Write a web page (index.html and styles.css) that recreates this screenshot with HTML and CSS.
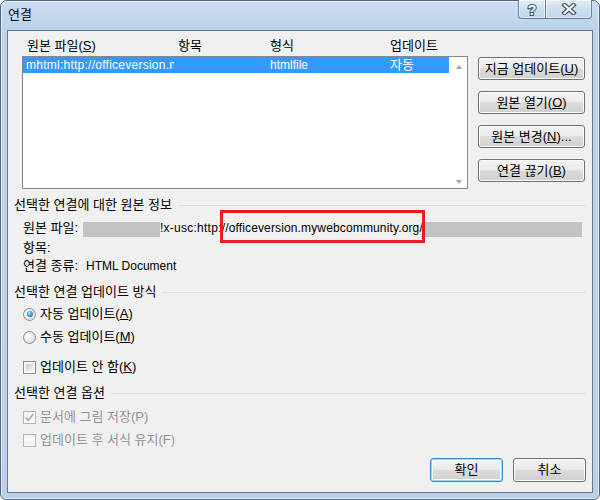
FILE: index.html
```html
<!DOCTYPE html>
<html lang="ko">
<head>
<meta charset="utf-8">
<title>연결</title>
<link rel="stylesheet" href="styles.css">
</head>
<body>
<div class="window">
  <div class="titlebar">
    <span class="title">연결</span>
    <div class="caption">
      <div class="cap help">
        <svg width="14" height="16" viewBox="0 0 14 16"><text x="7" y="13.5" text-anchor="middle" font-size="14" font-weight="bold" font-family="Liberation Sans, sans-serif" fill="#fff" stroke="#45556a" stroke-width="2.2" paint-order="stroke">?</text></svg>
      </div>
      <div class="cap close">
        <svg width="16" height="12" viewBox="0 0 16 12"><path d="M3.5 2L12.5 10M12.5 2L3.5 10" stroke="#45556a" stroke-width="4.4" stroke-linecap="square" fill="none"/><path d="M3.5 2L12.5 10M12.5 2L3.5 10" stroke="#fff" stroke-width="2" stroke-linecap="square" fill="none"/></svg>
      </div>
    </div>
  </div>
  <div class="client">
    <div class="top">
      <div class="links">
        <div class="cols head"><span>원본 파일(<u>S</u>)</span><span>항목</span><span>형식</span><span>업데이트</span></div>
        <div class="list">
          <div class="rows">
            <div class="cols row sel"><span class="cell1"><span class="clip lat url">mhtml:http://officeversion.m</span></span><span></span><span class="lat">htmlfile</span><span>자동</span></div>
          </div>
          <div class="scroll"><i class="arr up"></i><i class="arr down"></i></div>
        </div>
      </div>
      <div class="actions">
        <div class="btn">지금 업데이트(<u>U</u>)</div>
        <div class="btn">원본 열기(<u>O</u>)</div>
        <div class="btn">원본 변경(<u>N</u>)...</div>
        <div class="btn">연결 끊기(<u>B</u>)</div>
      </div>
    </div>

    <div class="sec-head h1"><span>선택한 연결에 대한 원본 정보</span></div>
    <div class="sec-body">
      <div class="line src">
        <span class="lbl">원본 파일:</span>
        <span class="mask m1"></span>
        <span class="lat url">!x-usc:http:</span><span class="lat url hl">//officeversion.mywebcommunity.org/</span>
        <span class="mask m2"></span>
      </div>
      <div class="line item"><span>항목:</span></div>
      <div class="line kind"><span class="lbl2">연결 종류:</span><span class="lat">HTML Document</span></div>
    </div>

    <div class="sec-head h2"><span>선택한 연결 업데이트 방식</span></div>
    <div class="sec-body">
      <div class="line opt r1"><i class="radio on"></i><span>자동 업데이트(<u>A</u>)</span></div>
      <div class="line opt r2"><i class="radio"></i><span>수동 업데이트(<u>M</u>)</span></div>
      <div class="line opt c1"><i class="check"></i><span>업데이트 안 함(<u>K</u>)</span></div>
    </div>

    <div class="sec-head h3"><span>선택한 연결 옵션</span></div>
    <div class="sec-body">
      <div class="line opt dis c2"><i class="check off"><svg width="11" height="11" viewBox="0 0 11 11"><path d="M1.8 5.6L4.2 8.2L9.2 2.2" stroke="#a9a9a9" stroke-width="1.7" fill="none"/></svg></i><span>문서에 그림 저장(P)</span></div>
      <div class="line opt dis c3"><i class="check off"></i><span>업데이트 후 서식 유지(F)</span></div>
    </div>

    <div class="footer">
      <div class="btn default">확인</div>
      <div class="btn">취소</div>
    </div>
  </div>
</div>
</body>
</html>
```
FILE: styles.css
```css
* { box-sizing: border-box; }
body {
  margin: 0;
  font-family: "Liberation Sans", "Noto Sans CJK KR", sans-serif;
  font-size: 13px;
  line-height: 16px;
  color: #000;
  background: #fff;
}
u { text-decoration: underline; text-underline-offset: 1px; }
.lat { font-size: 12px; }
.url { letter-spacing: 0.25px; }
.hl.url { letter-spacing: 0.14px; }

.window {
  width: 600px;
  height: 500px;
  border: 1px solid #56667b;
  border-radius: 7px 7px 6px 6px;
  background: linear-gradient(#cadcf1, #bcd3eb 30px, #b9d1ea);
  box-shadow: inset 0 0 0 1px rgba(255,255,255,0.6);
  padding: 0 6px 6px;
  display: flex;
  flex-direction: column;
}
.titlebar {
  height: 29px;
  display: flex;
  justify-content: space-between;
  align-items: flex-start;
}
.title {
  margin: 6px 0 0 1px;
  color: #0a0a0a;
}
.caption {
  display: flex;
  margin: -1px 1px 0 0;
}
.cap {
  height: 19px;
  border: 1px solid #6c7c91;
  border-top: none;
  background: linear-gradient(#e3edf8, #cddef0 50%, #c2d6ec);
  box-shadow: inset 0 0 0 1px rgba(255,255,255,0.55);
  display: flex;
  align-items: center;
  justify-content: center;
}
.help { width: 27px; border-right: none; border-radius: 0 0 0 4px; }
.close { width: 47px; border-radius: 0 0 4px 0; }

.client {
  flex: 1;
  border: 1px solid #6b7889;
  background: #f0f0f0;
  padding: 0 6px;
  display: flex;
  flex-direction: column;
}
.top {
  display: flex;
  gap: 10px;
  padding-left: 8px;
}
.links { width: 446px; }
.cols {
  display: grid;
  grid-template-columns: 151px 92px 120px 1fr;
  white-space: nowrap;
}
.head {
  height: 25px;
  padding: 0 0 2px 5px;
  align-items: end;
}
.list {
  height: 133px;
  border: 1px solid #828790;
  background: #fff;
  display: flex;
}
.rows { flex: 1; margin-right: 1px; }
.row {
  height: 16px;
  line-height: 16px;
  padding-left: 3px;
  grid-template-columns: 152px 92px 120px 1fr;
}
.sel { background: #3399ff; color: #fff; }
.cell1 { overflow: hidden; }
.clip { display: block; width: 148px; overflow: hidden; }
.scroll {
  width: 17px;
  display: flex;
  flex-direction: column;
  justify-content: space-between;
  align-items: center;
  padding: 8px 0 4px;
}
.arr {
  width: 0; height: 0;
  border-left: 3.5px solid transparent;
  border-right: 3.5px solid transparent;
}
.arr.up { border-bottom: 4px solid #a5a5a5; }
.arr.down { border-top: 4px solid #a5a5a5; }

.actions {
  width: 107px;
  padding-top: 26px;
  display: flex;
  flex-direction: column;
  gap: 11px;
}
.btn {
  height: 23px;
  border: 1px solid #707070;
  border-radius: 3px;
  background: linear-gradient(#f3f3f3, #ebebeb 46%, #dcdcdc 52%, #cfcfcf);
  box-shadow: inset 0 0 0 1px #fbfbfb;
  display: flex;
  align-items: center;
  justify-content: center;
  white-space: nowrap;
}

.sec-head {
  height: 16px;
  display: flex;
  align-items: center;
  white-space: nowrap;
}
.sec-head::after {
  content: "";
  flex: 1;
  height: 1px;
  margin-left: 6px;
  background: #d6dee6;
}
.h1 { margin-top: 8px; }
.h2 { margin-top: 10px; }
.h3 { margin-top: 9px; }
.sec-body { padding-left: 9px; }
.line {
  display: flex;
  align-items: center;
  white-space: nowrap;
  height: 18px;
}
.src { margin-top: 6px; }
.item { margin-top: 2px; }
.kind { height: 17px; }
.lbl { width: 60px; }
.lbl2 { width: 63px; }
.mask { height: 15px; background: #c3c3c3; margin-top: 2px; }
.m1 { width: 77px; }
.m2 { flex: 1; margin-right: 4px; }
.hl {
  position: relative;
  display: inline-block;
  height: 16px;
}
.hl::after {
  content: "";
  position: absolute;
  left: -2px;
  right: -2px;
  top: -10px;
  bottom: -7px;
  border: 3px solid #ec1c24;
}

.r1 { margin-top: 5px; }
.r2 { margin-top: 5px; }
.c1 { margin-top: 12px; }
.c2 { margin-top: 7px; }
.c3 { margin-top: 5px; }
.opt > i { margin-right: 4px; flex: none; }
.radio {
  width: 13px;
  height: 13px;
  border-radius: 50%;
  border: 1px solid #8e8f8f;
  background: radial-gradient(circle at 40% 40%, #ffffff, #e8e8e8 55%, #cdcdcd);
  display: flex;
  align-items: center;
  justify-content: center;
}
.radio.on::after {
  content: "";
  width: 6px;
  height: 6px;
  border-radius: 50%;
  background: radial-gradient(circle at 40% 35%, #a8e4ff, #2a8fd0 55%, #0f4c84);
}
.check {
  width: 13px;
  height: 13px;
  border: 1px solid #8e8f8f;
  padding: 2px;
  background: linear-gradient(135deg, #c6cad0, #f6f6f6) content-box, #f6f6f6;
  display: flex;
  align-items: center;
  justify-content: center;
}
.check.off {
  border-color: #b5b5b5;
  background: #f6f6f6;
  padding: 0;
}
.dis { color: #939393; }

.footer {
  margin-top: 9px;
  display: flex;
  justify-content: flex-end;
  gap: 10px;
}
.footer .btn { width: 73px; height: 24px; }
.btn.default {
  border-color: #3a8fd3;
  box-shadow: inset 0 0 0 1px #8fd8f6, inset 0 0 0 2px #f3fbff;
}
```
